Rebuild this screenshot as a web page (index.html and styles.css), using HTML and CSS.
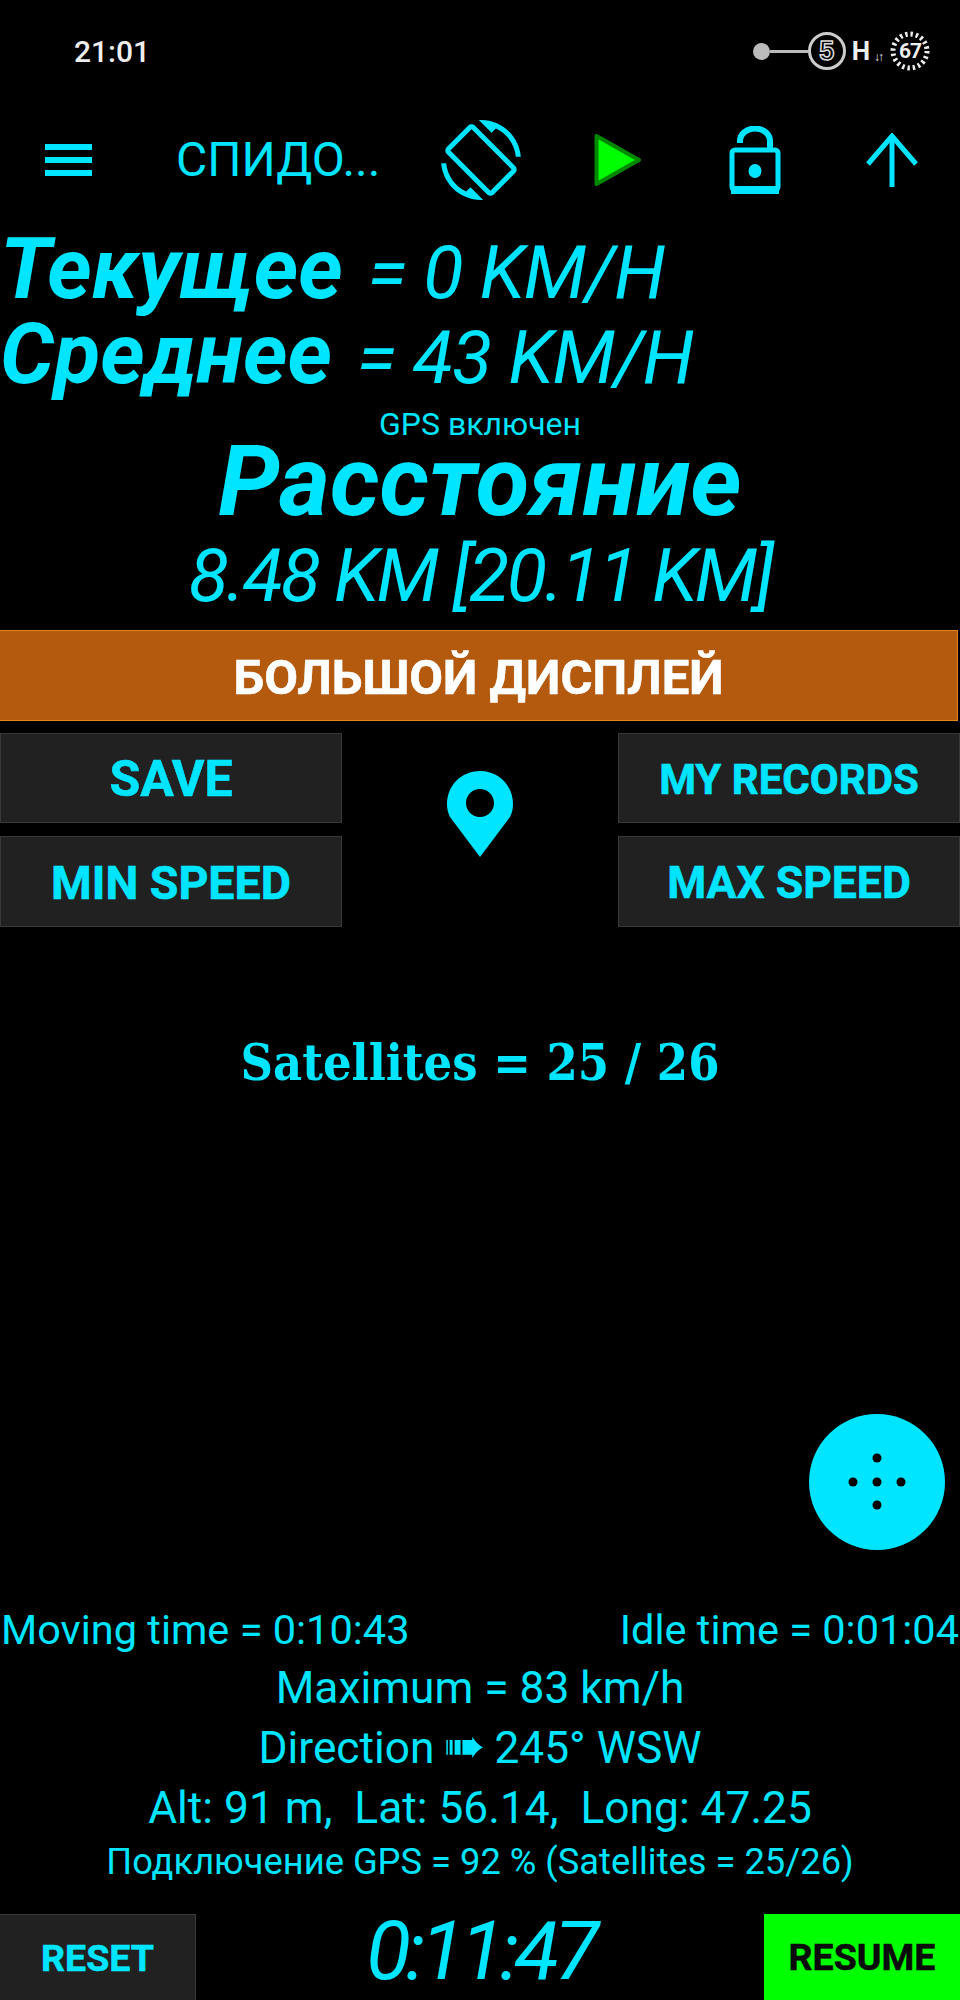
FILE: index.html
```html
<!DOCTYPE html>
<html lang="ru">
<head>
<meta charset="utf-8">
<title>Спидометр</title>
<link rel="stylesheet" href="styles.css">
</head>
<body>
<div class="screen">
  <header class="status">
    <span class="clock">21:01</span>
    <div class="status-icons">
      <span class="knob"></span>
      <span class="wire"></span>
      <span class="ring-five">5</span>
      <span class="net">H</span>
      <span class="traffic">↓↑</span>
      <span class="battery">
        <svg class="battery-ring" viewBox="0 0 40 40" width="40" height="40"><circle cx="20" cy="20" r="17" fill="none" stroke="#eee" stroke-width="5" stroke-dasharray="2.4 2.94"/></svg>
        <span class="battery-num">67</span>
      </span>
    </div>
  </header>

  <nav class="toolbar">
    <svg class="ic-menu" viewBox="0 0 47 32" width="47" height="32"><path d="M0 0h47v6H0zM0 13h47v6H0zM0 26h47v6H0z" fill="#00e5ff"/></svg>
    <span class="title">СПИДО...</span>
    <svg class="ic-rotate" viewBox="0 0 24 24" width="80" height="80"><path fill="#00e5ff" d="M16.48 2.52c3.27 1.55 5.61 4.72 5.97 8.48h1.5C23.44 4.84 18.29 0 12 0l-.66.03 3.81 3.81 1.33-1.32zm-6.25-.77c-.59-.59-1.54-.59-2.12 0L1.75 8.11c-.59.59-.59 1.54 0 2.12l12.02 12.02c.59.59 1.54.59 2.12 0l6.36-6.36c.59-.59.59-1.54 0-2.12L10.23 1.75zm4.6 19.44L2.81 9.17l6.36-6.36 12.02 12.02-6.36 6.36zm-7.31.29C4.25 19.94 1.91 16.76 1.55 13H.05C.56 19.16 5.71 24 12 24l.66-.03-3.81-3.81-1.33 1.32z"/></svg>
    <svg class="ic-play" viewBox="0 0 48 54" width="48" height="54"><path d="M2.5 3 45 27 2.5 51z" fill="#00ff00" stroke="#008800" stroke-width="4" stroke-linejoin="round"/></svg>
    <svg class="ic-lock" viewBox="0 0 52 68" width="52" height="68"><path d="M11 17V15a15 12.500 0 0 1 30 0v10" fill="none" stroke="#00e5ff" stroke-width="6"/><path d="M3 27a3 3 0 0 1 3-3h40a3 3 0 0 1 3 3v34a3 3 0 0 1-3 3H6a3 3 0 0 1-3-3z" fill="none" stroke="#00e5ff" stroke-width="5"/><path d="M2 60h48v8H2z" fill="#00e5ff"/><ellipse cx="26" cy="45" rx="6.500" ry="7" fill="#00e5ff"/></svg>
    <svg class="ic-up" viewBox="0 0 52 54" width="52" height="54"><path d="M26 54V3" stroke="#00e5ff" stroke-width="5" fill="none"/><path d="M2 31 26 3l24 28" stroke="#00e5ff" stroke-width="5" fill="none"/></svg>
  </nav>

  <section class="readout">
    <p class="speed"><b class="speed-label">Текущее</b><span class="lcd lcd-line lcd-a">= 0 KM/H</span></p>
    <p class="speed"><b class="speed-label">Среднее</b><span class="lcd lcd-line lcd-b">= 43 KM/H</span></p>
    <p class="gps-state">GPS включен</p>
    <h1 class="distance-label">Расстояние</h1>
    <p class="lcd distance">8.48 KM [20.11 KM]</p>
  </section>

  <button class="big-display">БОЛЬШОЙ ДИСПЛЕЙ</button>

  <div class="actions">
    <button class="btn btn-save">SAVE</button>
    <div class="pin-cell">
      <svg viewBox="0 0 66 86" width="66" height="86"><path fill-rule="evenodd" fill="#00e5ff" d="M33 0C14 0 0 15 0 33c0 5 1 9 3 13l30 40 30-40c2-4 3-8 3-13C66 15 52 0 33 0zm0 18c7.500 0 14 6 14 14s-6.500 14-14 14-14-6-14-14 6.500-14 14-14z"/></svg>
    </div>
    <button class="btn btn-records">MY RECORDS</button>
    <button class="btn btn-min">MIN SPEED</button>
    <button class="btn btn-max">MAX SPEED</button>
  </div>

  <p class="satellites">Satellites = 25 / 26</p>

  <section class="stats">
    <div class="stat-split"><span>Moving time = 0:10:43</span><span>Idle time = 0:01:04</span></div>
    <p class="stat">Maximum = 83 km/h</p>
    <p class="stat">Direction <span class="dir-arrow">➠</span> 245° WSW</p>
    <p class="stat">Alt: 91 m,&nbsp; Lat: 56.14,&nbsp; Long: 47.25</p>
    <p class="stat stat-small">Подключение GPS = 92 % (Satellites = 25/26)</p>
  </section>

  <footer class="bottom">
    <button class="btn-foot reset">RESET</button>
    <span class="lcd timer">0:11:47</span>
    <button class="btn-foot resume">RESUME</button>
  </footer>

  <button class="fab" aria-label="Menu">
    <svg viewBox="0 0 136 136" width="136" height="136"><g fill="#000"><circle cx="68" cy="44" r="4.500"/><circle cx="44" cy="68" r="4.500"/><circle cx="68" cy="68" r="4.500"/><circle cx="92" cy="68" r="4.500"/><circle cx="68" cy="91" r="4.500"/></g></svg>
  </button>
</div>
</body>
</html>
```
FILE: styles.css
```css
* { box-sizing: border-box; }
html, body { margin: 0; padding: 0; background: #000; }
body { font-family: Roboto, "Liberation Sans", sans-serif; color: #00e5ff; }
p, h1 { margin: 0; }
button { font-family: inherit; cursor: pointer; padding: 0; }

.screen {
  position: relative;
  width: 960px;
  height: 2000px;
  display: flex;
  flex-direction: column;
  overflow: hidden;
  background: #000;
}

/* status bar */
.status {
  height: 100px;
  padding: 36px 0 0 74px;
  display: flex;
  justify-content: space-between;
  align-items: flex-start;
  color: #eee;
}
.clock { font-size: 30px; font-weight: 500; line-height: 32px; }
.status-icons { display: flex; align-items: center; height: 30px; padding-right: 30px; }
.knob { width: 17px; height: 17px; border-radius: 50%; background: #bbb; }
.wire { width: 38px; height: 3px; background: #bbb; }
.ring-five {
  width: 38px; height: 38px; border: 3px solid #ccc; border-radius: 50%;
  text-align: center; font: 700 27px/32px "Liberation Sans", sans-serif; color: #000;
  -webkit-text-stroke: 1.5px #ddd;
}
.net { margin-left: 6px; font-size: 26px; font-weight: 700; line-height: 24px; }
.traffic { font-size: 12px; line-height: 12px; margin: 12px 0 0 4px; letter-spacing: -2px; width: 16px; }
.battery { position: relative; width: 40px; height: 40px; display: flex; align-items: center; justify-content: center; }
.battery-ring { position: absolute; left: 0; top: 0; }
.battery-num { position: relative; font-size: 21px; font-weight: 700; letter-spacing: -1px; }

/* toolbar */
.toolbar { height: 120px; display: flex; align-items: center; }
.ic-menu { margin-left: 45px; flex: none; }
.title { margin-left: 84px; width: 224px; flex: none; font-size: 48px; line-height: 56px; white-space: nowrap; }
.ic-rotate { margin-left: 41px; flex: none; }
.ic-play { margin-left: 73px; flex: none; }
.ic-lock { margin-left: 87px; flex: none; }
.ic-up { margin-left: 85px; flex: none; }

/* readout */
.readout { margin-top: 7px; }
.speed { height: 85px; display: flex; align-items: baseline; white-space: nowrap; padding-left: 0; }
.speed-label { font-size: 85px; line-height: 85px; font-style: italic; font-weight: 700; }
.lcd { font-style: italic; font-weight: 400; white-space: nowrap; }
.lcd-line { font-size: 74px; letter-spacing: -1px; }
.lcd-a { margin-left: 25px; }
.lcd-b { margin-left: 25px; }
.gps-state { margin-top: 18px; text-align: center; font-size: 32px; line-height: 18px; }
.distance-label { margin-top: -1px; text-align: center; font-size: 98px; line-height: 100px; font-style: italic; font-weight: 700; }
.distance { margin-top: 14px; text-align: center; font-size: 74px; line-height: 60px; letter-spacing: -2.500px; }

/* orange button */
.big-display {
  margin-top: 24px;
  padding-top: 3px;
  width: 958px;
  height: 91px;
  flex: none;
  background: #b35a0f;
  border: 0;
  border-top: 1px solid #e0851a;
  border-bottom: 1px solid #e0851a;
  border-right: 1px solid #e0851a;
  color: #fff;
  font-size: 49px;
  font-weight: 700;
  -webkit-text-stroke: 0.6px currentColor;
}

/* action buttons */
.actions {
  margin-top: 12px;
  display: grid;
  grid-template-columns: 342px 1fr 342px;
  grid-template-rows: 90px 91px;
  row-gap: 13px;
}
.btn {
  padding-top: 2px;
  background: #212121;
  border: 1px solid #383838;
  color: #00e5ff;
  font-weight: 700;
  -webkit-text-stroke: 0.6px currentColor;
}
.btn-save { font-size: 50px; grid-column: 1; grid-row: 1; }
.btn-records { font-size: 42px; grid-column: 3; grid-row: 1; }
.btn-min { font-size: 46.500px; grid-column: 1; grid-row: 2; }
.btn-max { font-size: 44.500px; grid-column: 3; grid-row: 2; }
.pin-cell { grid-row: 1 / span 2; grid-column: 2; padding-top: 38px; display: flex; justify-content: center; align-items: flex-start; }

.satellites {
  margin-top: 106px;
  text-align: center;
  font-family: "DejaVu Serif", serif;
  font-stretch: condensed;
  font-size: 50px;
  font-weight: 700;
  line-height: 60px;
}

/* stats */
.stats { margin-top: auto; }
.stat-split { display: flex; justify-content: space-between; font-size: 41.500px; line-height: 57px; padding: 0 1px; }
.stat { text-align: center; font-size: 44.300px; line-height: 60px; white-space: nowrap; }
.stat-small { font-size: 36.300px; line-height: 42px; margin-top: 3px; }
.dir-arrow { font-family: "DejaVu Sans", sans-serif; font-size: 50px; line-height: 0; margin: 0 -2px; }

/* bottom bar */
.bottom { height: 86px; margin-top: 31px; display: flex; justify-content: space-between; align-items: stretch; flex: none; }
.btn-foot { width: 196px; border: 0; font-size: 37.500px; font-weight: 700; -webkit-text-stroke: 0.5px currentColor; }
.reset { background: #212121; border-top: 1px solid #383838; border-right: 1px solid #383838; color: #00e5ff; }
.resume { background: #00ff00; color: #0a0a0a; }
.timer { font-size: 82px; line-height: 86px; letter-spacing: -5px; align-self: center; margin-bottom: 12px; }

/* floating button */
.fab {
  position: absolute;
  left: 809px;
  top: 1414px;
  width: 136px;
  height: 136px;
  border-radius: 50%;
  border: 0;
  background: #00e5ff;
  display: flex;
}
```
